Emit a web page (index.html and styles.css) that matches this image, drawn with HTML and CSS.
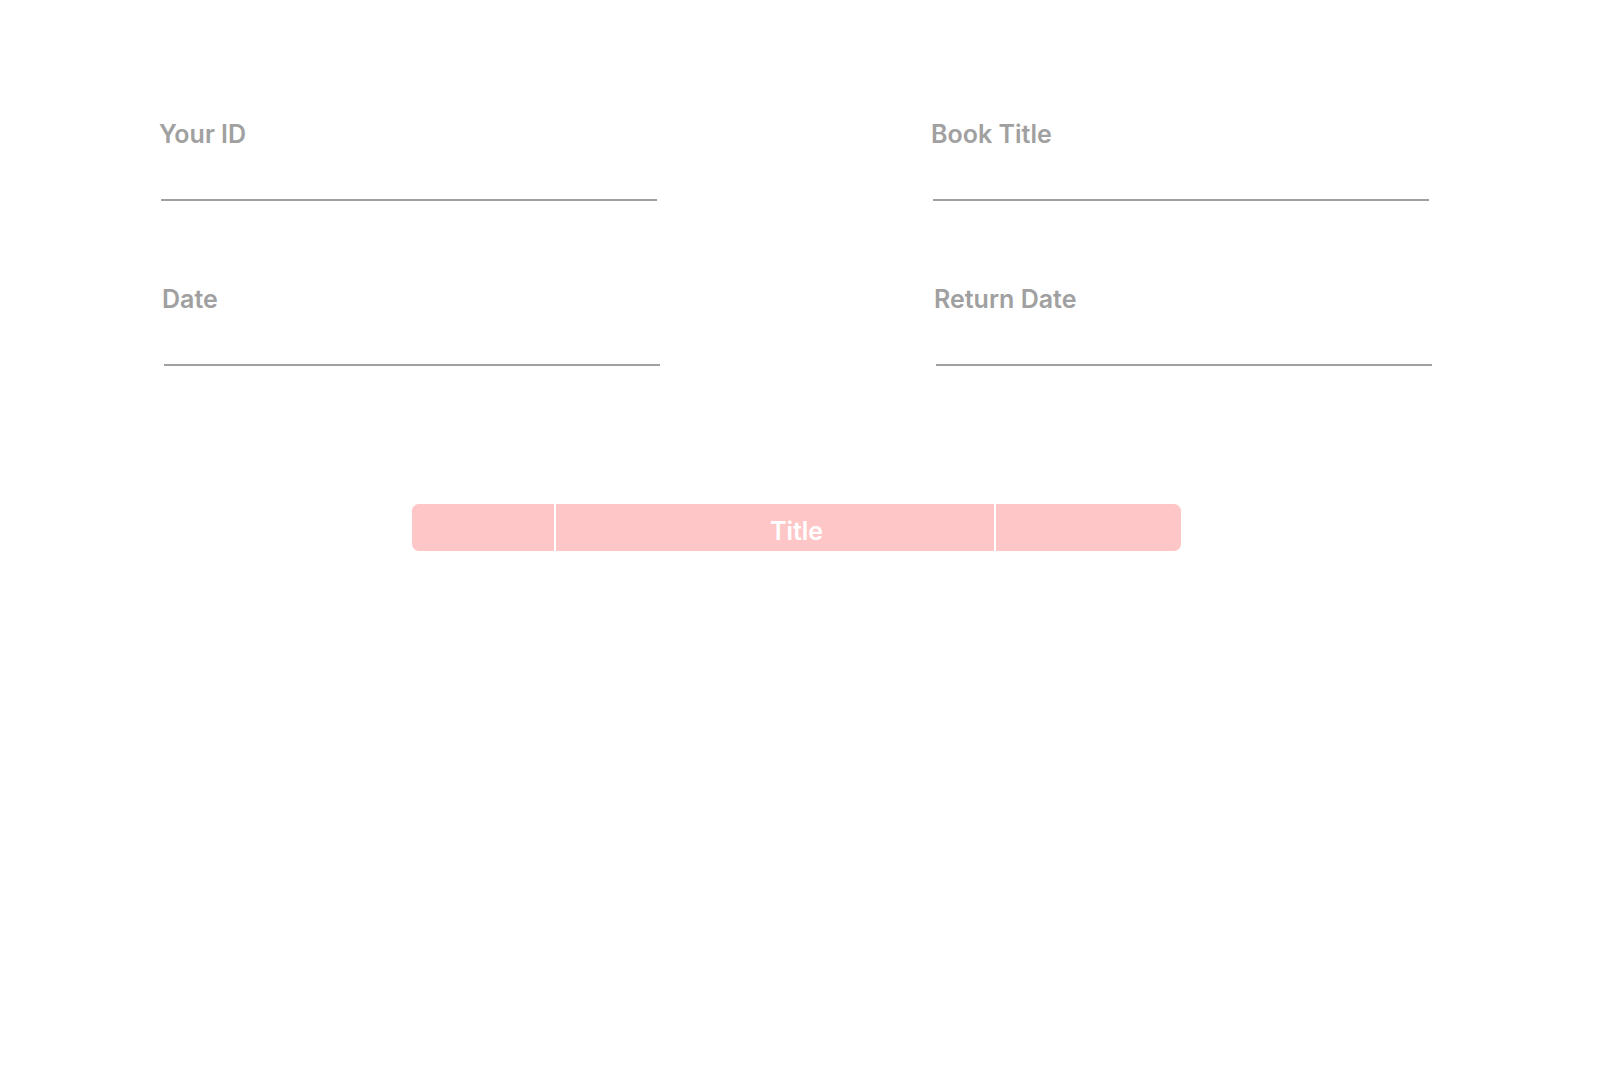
FILE: index.html
```html
<!DOCTYPE html>
<html lang="en">
<head>
<meta charset="utf-8">
<title>Borrow a book</title>
<link rel="stylesheet" href="styles.css">
</head>
<body>
<main class="page">
  <form class="form">
    <div class="row">
      <div class="field">
        <label class="label" for="uid">Your ID</label>
        <input class="input" id="uid" type="text">
      </div>
      <div class="field">
        <label class="label" for="btitle">Book Title</label>
        <input class="input" id="btitle" type="text">
      </div>
    </div>
    <div class="row row-shift">
      <div class="field">
        <label class="label" for="date">Date</label>
        <input class="input" id="date" type="text">
      </div>
      <div class="field">
        <label class="label" for="rdate">Return Date</label>
        <input class="input" id="rdate" type="text">
      </div>
    </div>
  </form>
  <div class="bar">
    <div class="cell cell-a"></div>
    <div class="cell cell-b"></div>
    <div class="cell cell-c"></div>
    <div class="bar-title">Title</div>
  </div>
</main>
</body>
</html>
```
FILE: styles.css
```css
html, body {
  margin: 0;
  padding: 0;
  background: #ffffff;
}
body {
  font-family: Inter, "Noto Sans", "Liberation Sans", sans-serif;
}
.page {
  padding-top: 119px;
}
.form {
  display: flex;
  flex-direction: column;
  gap: 83px;
  padding-left: 159px;
}
.row {
  display: flex;
  gap: 274px;
}
.row-shift {
  padding-left: 3px;
}
.field {
  display: flex;
  flex-direction: column;
  width: 498px;
}
.label {
  font-size: 25px;
  font-weight: 600;
  color: #a0a0a0;
  line-height: 30px;
}
.input {
  margin: 30px 0 0 2px;
  width: 496px;
  height: 20px;
  padding: 0;
  border: none;
  border-bottom: 2px solid #a0a0a0;
  background: transparent;
  outline: none;
  box-sizing: content-box;
}
.bar {
  margin: 138px 0 0 412px;
  width: 769px;
  height: 47px;
  display: grid;
  grid-template-columns: 142px 442px 1fr;
  background: #fec6c6;
  border-radius: 7px;
  overflow: hidden;
}
.cell {
  grid-row: 1;
}
.cell-a { grid-column: 1; }
.cell-b { grid-column: 2; border-left: 2px solid #ffffff; border-right: 2px solid #ffffff; }
.cell-c { grid-column: 3; }
.bar-title {
  grid-row: 1;
  grid-column: 1 / -1;
  align-self: center;
  justify-self: center;
  padding-top: 7px;
  font-size: 25px;
  font-weight: 600;
  color: #ffffff;
}
```
